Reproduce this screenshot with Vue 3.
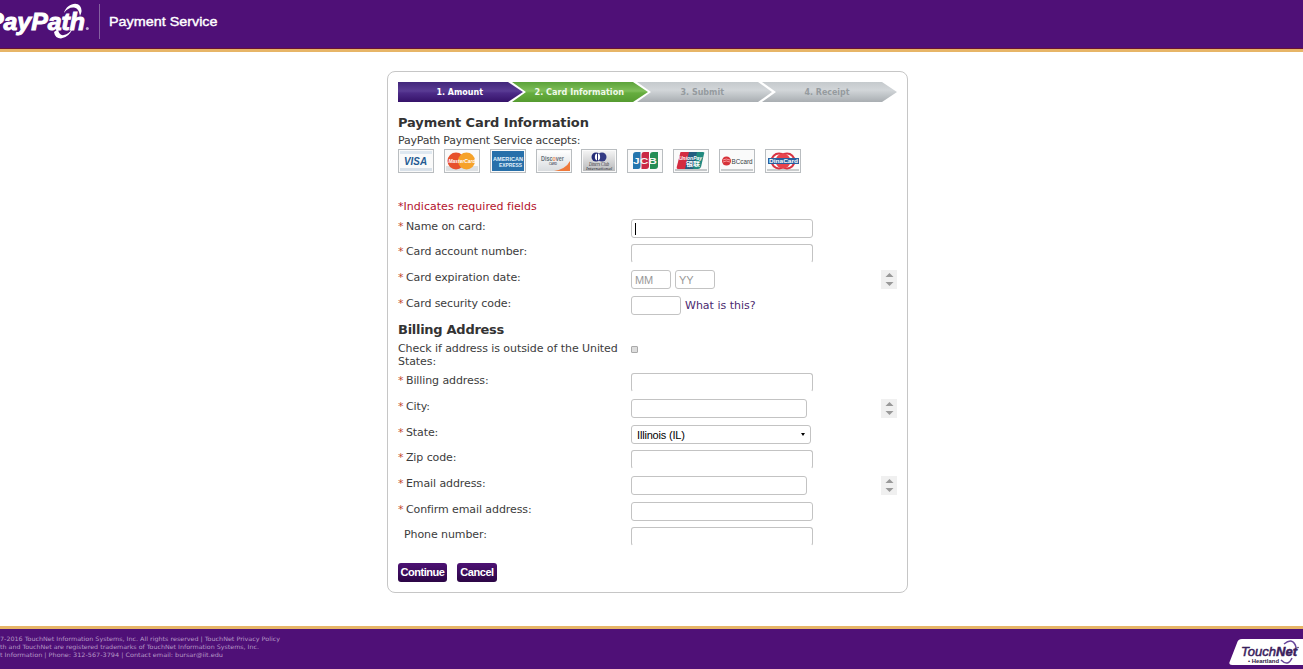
<script setup>
import { ref } from 'vue'

const cardRows = [
  { id: 'name', label: 'Name on card:', h: 25, kind: 'focused', w: 182 },
  { id: 'acct', label: 'Card account number:', h: 26, kind: 'cut', w: 182 },
  { id: 'exp', label: 'Card expiration date:', h: 26, kind: 'date', spin: true },
  { id: 'cvv', label: 'Card security code:', h: 26, kind: 'code', w: 50 },
]
const addressRows = [
  { id: 'addr', label: 'Billing address:', h: 26, kind: 'cut', w: 182 },
  { id: 'city', label: 'City:', h: 26, kind: 'text', w: 176, spin: true },
  { id: 'state', label: 'State:', h: 25, kind: 'select', w: 180 },
  { id: 'zip', label: 'Zip code:', h: 26, kind: 'cut', w: 182 },
  { id: 'email', label: 'Email address:', h: 26, kind: 'text', w: 176, spin: true },
  { id: 'confirm', label: 'Confirm email address:', h: 25, kind: 'text', w: 182 },
  { id: 'phone', label: 'Phone number:', h: 36, kind: 'cut', w: 182, optional: true },
]
const sections = ref([cardRows, addressRows])
</script>

<template>
  <div class="page">
    <header class="top">
      <svg class="brand" width="230" height="46" viewBox="0 0 230 46">
        <text x="-13" y="30" class="logo" textLength="98" lengthAdjust="spacingAndGlyphs">PayPath</text>
        <path d="M64 13C66 5 76 1 80 6Q83 10 80 16Q79 8 74 7.500Q68 7 64 13Z" fill="#fff" />
        <path d="M54 32Q55 38.500 61 38.500Q69 37.500 73 28Q69 34 64 35Q59 36 58 29Z" fill="#fff" />
        <circle cx="87.300" cy="28.500" r="1.500" fill="#c8b2d6" />
        <path d="M99.500 4V39" stroke="#8560a1" />
        <text x="109" y="25.500" class="service" textLength="108.500" lengthAdjust="spacingAndGlyphs">Payment Service</text>
      </svg>
    </header>

    <main class="main">
      <section class="panel">
        <svg class="steps" width="500" height="20" viewBox="0 0 500 20">
          <defs>
            <linearGradient id="gp" x2="0" y2="1"><stop offset="0" stop-color="#42277b" /><stop offset=".45" stop-color="#5a3c94" /><stop offset=".55" stop-color="#4c2b87" /><stop offset="1" stop-color="#351269" /></linearGradient>
            <linearGradient id="gg" x2="0" y2="1"><stop offset="0" stop-color="#5ca33b" /><stop offset=".45" stop-color="#80bf5a" /><stop offset=".55" stop-color="#66ad3f" /><stop offset="1" stop-color="#559b30" /></linearGradient>
            <linearGradient id="gs" x2="0" y2="1"><stop offset="0" stop-color="#c5cacd" /><stop offset=".4" stop-color="#d2d6d9" /><stop offset="1" stop-color="#a9aeb2" /></linearGradient>
          </defs>
          <path d="M0 0H110L125 10L110 20H0Z" fill="url(#gp)" />
          <path d="M114 0H235L250 10L235 20H114L128 10Z" fill="url(#gg)" />
          <path d="M239 0H360L374 10L360 20H239L253 10Z" fill="url(#gs)" />
          <path d="M364 0H484L499 10L484 20H364L378 10Z" fill="url(#gs)" />
          <g class="step-text">
            <text x="38.500" y="13" fill="#fff" textLength="46.500" lengthAdjust="spacingAndGlyphs">1. Amount</text>
            <text x="136.500" y="13" fill="#eff9e9" textLength="89.500" lengthAdjust="spacingAndGlyphs">2. Card Information</text>
            <text x="282.500" y="13" fill="#959b9f" textLength="43.500" lengthAdjust="spacingAndGlyphs">3. Submit</text>
            <text x="406.500" y="13" fill="#959b9f" textLength="45" lengthAdjust="spacingAndGlyphs">4. Receipt</text>
          </g>
        </svg>

        <h2 class="title t1">Payment Card Information</h2>
        <p class="accepts">PayPath Payment Service accepts:</p>

        <svg class="cards" width="403" height="24" viewBox="0 0 403 24">
          <defs>
            <linearGradient id="cg" x2="0" y2="1"><stop offset="0" stop-color="#fff" /><stop offset="1" stop-color="#d9dcdf" /></linearGradient>
            <linearGradient id="dg" x2="0" y2="1"><stop offset="0" stop-color="#f3f3f3" /><stop offset="1" stop-color="#b9babc" /></linearGradient>
          </defs>
          <g stroke="#b9bdc0" fill="#fafafa">
            <rect x=".5" y=".5" width="35" height="23" />
            <rect x="46.500" y=".5" width="35" height="23" />
            <rect x="92.500" y=".5" width="35" height="23" />
            <rect x="138.500" y=".5" width="35" height="23" />
            <rect x="183.500" y=".5" width="35" height="23" />
            <rect x="229.500" y=".5" width="35" height="23" />
            <rect x="275.500" y=".5" width="35" height="23" />
            <rect x="321.500" y=".5" width="35" height="23" />
            <rect x="367.500" y=".5" width="35" height="23" />
          </g>
          <rect x="2" y="2" width="32" height="3" fill="#dfe8f0" />
          <rect x="2" y="19" width="32" height="3" fill="#d9e1e9" />
          <text x="6" y="16" class="ct" font-size="10.500" font-style="italic" fill="#245b92" textLength="23" lengthAdjust="spacingAndGlyphs">VISA</text>

          <rect x="48" y="17" width="32" height="5" fill="#dde0e2" />
          <circle cx="58" cy="12" r="8.500" fill="#e7512c" /><circle cx="68.500" cy="12" r="8.500" fill="#f6a229" />
          <text x="50.500" y="14" class="ct" font-size="6" font-style="italic" fill="#fff" textLength="27" lengthAdjust="spacingAndGlyphs">MasterCard</text>

          <rect x="94" y="2" width="32" height="20" fill="#2870aa" />
          <text x="95" y="12" class="ct" font-size="6" fill="#e4f2fb" textLength="30" lengthAdjust="spacingAndGlyphs">AMERICAN</text>
          <text x="101" y="18" class="ct" font-size="6" fill="#e4f2fb" textLength="23" lengthAdjust="spacingAndGlyphs">EXPRESS</text>

          <rect x="140" y="2" width="32" height="20" fill="url(#cg)" />
          <path d="M172 12V22H156Q168 20 172 12Z" fill="#ef793b" />
          <text x="143" y="12" class="ct" font-size="6.500" fill="#66727b" textLength="23" lengthAdjust="spacingAndGlyphs">Disc<tspan fill="#f19662">o</tspan>ver</text>
          <text x="151" y="16" class="ct" font-size="4" fill="#59646c" textLength="8" lengthAdjust="spacingAndGlyphs">CARD</text>

          <rect x="185" y="2" width="32" height="20" fill="url(#dg)" />
          <circle cx="198" cy="8" r="4.500" fill="#252c78" /><ellipse cx="204" cy="8" rx="4.500" ry="4.500" fill="#343b84" />
          <ellipse cx="199.500" cy="8" rx="2.600" ry="3.400" fill="#fff" /><path d="M199.500 4V12" stroke="#252c78" />
          <text x="191" y="17" class="ser" font-size="5.500" font-style="italic" fill="#292d33" textLength="20" lengthAdjust="spacingAndGlyphs">Diners Club</text>
          <text x="188" y="21" class="ser" font-size="5" font-style="italic" fill="#292d33" textLength="26" lengthAdjust="spacingAndGlyphs">International</text>

          <path d="M235 20V6Q235 3 238 3H242.500V17Q242.500 20 240 20Z" fill="#2475ae" />
          <path d="M243.500 20V6Q243.500 3 246 3H251V17Q251 20 248 20Z" fill="#ca2945" />
          <path d="M252 20V6Q252 3 255 3H260V17Q260 20 257 20Z" fill="#258d54" />
          <text x="235" y="15" class="ct" font-size="9" fill="#f5f5f5" textLength="24" lengthAdjust="spacingAndGlyphs">JCB</text>

          <rect x="277" y="20" width="32" height="2" fill="#c5c8ca" />
          <path d="M283 3H293L289 20H280Q278 20 279 17L282 5Q282 3 283 3Z" fill="#d42c40" />
          <path d="M291 3H300L296 20H287Z" fill="#245c80" />
          <path d="M299 3H305Q307 3 306 5L303 18Q302 20 300 20H295Z" fill="#21897f" />
          <text x="281" y="11" class="ct" font-size="6" font-style="italic" fill="#fff" textLength="23" lengthAdjust="spacingAndGlyphs">UnionPay</text>
          <text x="288" y="17" class="ct cjk" font-size="6" fill="#fff" textLength="14" lengthAdjust="spacingAndGlyphs">银联</text>

          <rect x="323" y="20" width="32" height="2" fill="#c9cccd" />
          <circle cx="328.500" cy="12" r="4.500" fill="#d53239" /><path d="M325 11Q328 9 332 11M325 13Q328 11 332 13" stroke="#ffadb0" fill="none" stroke-width=".8" />
          <text x="333.500" y="14.500" font-size="7.500" fill="#363f44" textLength="21" lengthAdjust="spacingAndGlyphs">BCcard</text>

          <rect x="369" y="20" width="32" height="2" fill="#c9cccd" />
          <circle cx="381" cy="12" r="7.500" fill="none" stroke="#d83242" stroke-width="2" />
          <circle cx="389" cy="12" r="7.500" fill="none" stroke="#d83242" stroke-width="2" />
          <circle cx="385" cy="12" r="7.500" fill="#e9444d" />
          <rect x="370" y="9" width="31" height="6" fill="#285f9f" />
          <text x="371" y="14" class="ct" font-size="6" fill="#fff" textLength="29" lengthAdjust="spacingAndGlyphs">DinaCard</text>
        </svg>

        <p class="note">*Indicates required fields</p>

        <template v-for="(rows, i) in sections" :key="i">
          <template v-if="i === 1">
            <h2 class="title t2">Billing Address</h2>
            <div class="outside">
              <div class="outside-label">Check if address is outside of the United<br>States:</div>
              <span class="check"></span>
            </div>
          </template>
          <div v-for="r in rows" :key="r.id" class="row" :style="{ height: r.h + 'px' }">
            <div class="label" :class="{ optional: r.optional }"><span v-if="!r.optional" class="star">*</span>{{ r.label }}</div>
            <div class="field">
              <template v-if="r.kind === 'date'">
                <span class="box small">MM</span><span class="box small">YY</span>
              </template>
              <span v-else class="box" :class="r.kind" :style="{ width: r.w + 'px' }">
                <i v-if="r.kind === 'focused'" class="caret"></i>
                <template v-if="r.kind === 'select'"><span class="value">Illinois (IL)</span>
                  <svg width="4" height="3" viewBox="0 0 4 3"><path d="M0 0H4L2 3Z" fill="#000" /></svg>
                </template>
              </span>
              <a v-if="r.kind === 'code'" class="help">What is this?</a>
            </div>
            <svg v-if="r.spin" class="spin" width="16" height="19" viewBox="0 0 16 19">
              <rect width="16" height="19" fill="#f0f0f0" />
              <path d="M4.500 7L8.500 3L12.500 7ZM4.500 12L8.500 16L12.500 12Z" fill="#999" />
            </svg>
          </div>
        </template>

        <div class="actions">
          <button class="btn b1">Continue</button>
          <button class="btn b2">Cancel</button>
        </div>
      </section>
    </main>

    <footer class="bottom">
      <svg class="legal" width="300" height="36" viewBox="0 0 300 36">
        <text x="0" y="12" textLength="280" lengthAdjust="spacingAndGlyphs">7-2016 TouchNet Information Systems, Inc. All rights reserved | TouchNet Privacy Policy</text>
        <text x="0" y="20" textLength="259" lengthAdjust="spacingAndGlyphs">th and TouchNet are registered trademarks of TouchNet Information Systems, Inc.</text>
        <text x="0" y="28" textLength="223" lengthAdjust="spacingAndGlyphs">t Information | Phone: 312-567-3794 | Contact email: bursar@iit.edu</text>
      </svg>
      <svg class="touchnet" width="75" height="40" viewBox="0 0 75 40">
        <path d="M14 10H75V36H4Q0 36 2 32L9 14Q10 10 14 10Z" fill="#fff" />
        <path d="M56 15Q65 8 68 18M53 31Q60 38 64 29" fill="none" stroke="#67459a" stroke-width="1.500" />
        <text x="13" y="27" class="tn" textLength="56" lengthAdjust="spacingAndGlyphs">Touch<tspan font-weight="bold">Net</tspan></text>
        <circle cx="70" cy="18.500" r=".8" fill="#46305c" />
        <text x="20" y="34.300" class="heart" textLength="31" lengthAdjust="spacingAndGlyphs">• Heartland</text>
      </svg>
    </footer>
  </div>
</template>

<style>
body { background: #fff; overflow: hidden; }
</style>

<style scoped>
.page { width: 1303px; height: 669px; display: flex; flex-direction: column; overflow: hidden; font: 11px/13px "DejaVu Sans", Verdana, sans-serif; color: #3c3c3c; }
svg { display: block; flex: none; }
.top { height: 52px; box-sizing: border-box; flex: none; background: #4f1077; border-bottom: 3px solid #e7b567; box-shadow: inset 0 -1px #691433; }
.logo { font: italic bold 24px "Liberation Sans", sans-serif; fill: #fff; stroke: #fff; stroke-width: 1; }
.service { font: 13.5px "Liberation Sans", sans-serif; fill: #fff; stroke: #fff; stroke-width: .4; }
.main { flex: 1; padding: 19px 0 0 387px; }
.panel { width: 521px; height: 522px; box-sizing: border-box; border: 1px solid #c6c6c6; border-radius: 8px; padding: 10px; }
.step-text { font: bold 8px "DejaVu Sans", sans-serif; }
.title { font-size: 13px; line-height: 16px; font-weight: bold; margin: 0; color: #333; white-space: nowrap; }
.t1 { margin-top: 13px; letter-spacing: -.1px; }
.accepts { margin: 3px 0 0; height: 15px; letter-spacing: -.22px; }
.ct { font-family: "Liberation Sans", sans-serif; font-weight: bold; }
.cjk { font-family: "Noto Sans CJK SC", sans-serif; }
.cards { font-family: "Liberation Sans", sans-serif; }
.ser { font-family: "Liberation Serif", serif; }
.note { margin: 27px 0 0; height: 19px; color: #b3122b; letter-spacing: .03px; }
.row { display: flex; }
.label { width: 233px; flex: none; padding-top: 1px; white-space: nowrap; letter-spacing: -.09px; }
.star { color: #c44a2d; margin-right: 2.5px; }
.optional { box-sizing: border-box; padding-left: 6px; }
.field { display: flex; flex: 1; gap: 4px; align-items: flex-start; }
.box { box-sizing: border-box; height: 19px; border: 1px solid #c3c3c3; border-radius: 3px; font: 11px/18px "Liberation Sans", sans-serif; background: #fff; }
.cut { border-bottom-color: transparent; }
.small { width: 40px; padding-left: 3px; color: #999; letter-spacing: -.2px; }
.caret { display: block; width: 1px; height: 12px; background: #000; margin: 3px 0 0 3px; }
.select { display: flex; justify-content: space-between; align-items: center; padding: 0 5px; color: #000; }
.value { letter-spacing: -.18px; line-height: 16px; }
.help { color: #4b2a70; padding-top: 3px; }
.t2 { height: 20px; letter-spacing: -.28px; }
.outside { height: 31px; display: flex; }
.outside-label { width: 233px; white-space: nowrap; letter-spacing: -.07px; }
.check { width: 7px; height: 7px; box-sizing: border-box; border: 1px solid #aaa; background: #ddd; border-radius: 1px; margin-top: 4px; }
.actions { display: flex; gap: 10px; }
.btn { height: 19px; border: 0; border-radius: 3px; padding: 0; background: linear-gradient(#4d1274, #2b0545); color: #fff; font: bold 11px/19px "Liberation Sans", sans-serif; letter-spacing: -.45px; white-space: nowrap; }
.b1 { width: 49px; }
.b2 { width: 40px; }
.bottom { height: 43px; flex: none; box-sizing: border-box; border-top: 3px solid #e7b567; background: #4f1077; display: flex; justify-content: space-between; }
.legal { font: 6px "DejaVu Sans", sans-serif; fill: #b597c5; }
.tn { font: italic 13px "Liberation Sans", sans-serif; fill: #39205c; stroke: #39205c; stroke-width: .5; }
.heart { font: bold 6px "Liberation Sans", sans-serif; fill: #302044; }
</style>
